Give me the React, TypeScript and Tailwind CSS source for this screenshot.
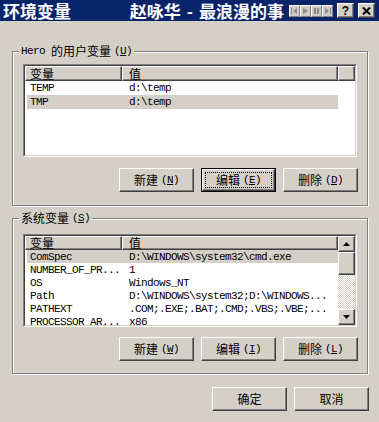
import React from "react";

const cjk = "font-['Noto_Sans_CJK_SC',sans-serif]";
const mono = "font-['Liberation_Mono',monospace] text-[11px] tracking-[-0.6px]";
const raised =
  "border border-t-white border-l-white border-r-[#404040] border-b-[#404040] shadow-[inset_-1px_-1px_0_#808080] bg-[#d4d0c8]";

function Acc({ zh, k }: { zh: string; k: string }) {
  return (
    <span className="inline-flex items-center text-[12px] leading-[12px]">
      <span className={cjk}>{zh}</span>
      <span className={`${mono} ml-[3px]`}>
        (<span className="underline underline-offset-1">{k}</span>)
      </span>
    </span>
  );
}

function Btn({ zh, k, def }: { zh: string; k?: string; def?: boolean }) {
  return (
    <div className={`w-[75px] h-[24px] ${def ? "border border-black" : ""}`}>
      <div className={`w-full h-full ${raised} p-[2px]`}>
        <div
          className={`w-full h-full flex items-center justify-center border ${
            def ? "border-dotted border-black" : "border-transparent"
          }`}
        >
          {k ? <Acc zh={zh} k={k} /> : <span className={`${cjk} text-[12px] leading-[12px]`}>{zh}</span>}
        </div>
      </div>
    </div>
  );
}

function MediaBtn({ children }: { children: React.ReactNode }) {
  return (
    <div className="w-[11px] h-[12px] bg-[#cfcbc4] border border-t-white border-l-white border-r-[#808080] border-b-[#808080] flex items-center justify-center">
      <svg width="7" height="6" viewBox="0 0 7 6" fill="#8a8a8a">
        {children}
      </svg>
    </div>
  );
}

function TitleBar() {
  const t = `${cjk} text-white font-bold text-[17px] leading-[20px]`;
  return (
    <div className="h-[21px] shrink-0 bg-[#0a246a] flex items-center pr-[4px]">
      <span className={`${t} ml-[3px]`}>环境变量</span>
      <span className={`${t} ml-auto flex`}>
        <span>赵咏华</span>
        <span className="mx-[6px]">-</span>
        <span>最浪漫的事</span>
      </span>
      <div className="ml-[5px] flex">
        <MediaBtn>
          <rect x="0" y="0" width="1" height="6" />
          <path d="M6 0 L2 3 L6 6 Z" />
        </MediaBtn>
        <MediaBtn>
          <path d="M1 0 L6 3 L1 6 Z" />
        </MediaBtn>
        <MediaBtn>
          <rect x="1" y="0" width="2" height="6" />
          <rect x="4" y="0" width="2" height="6" />
        </MediaBtn>
        <MediaBtn>
          <path d="M1 0 L5 3 L1 6 Z" />
          <rect x="6" y="0" width="1" height="6" />
        </MediaBtn>
      </div>
      <div className={`ml-[4px] w-[17px] h-[15px] ${raised} flex items-center justify-center`}>
        <span className="font-['Liberation_Sans',sans-serif] font-bold text-[12px] leading-[12px]">?</span>
      </div>
      <div className={`ml-[4px] w-[17px] h-[15px] ${raised} flex items-center justify-center`}>
        <svg width="9" height="8" viewBox="0 0 9 8">
          <path d="M1 0.5 L8 7.5 M8 0.5 L1 7.5" stroke="#000" strokeWidth="2" />
        </svg>
      </div>
    </div>
  );
}

type Row = [string, string];

function Arrow({ up }: { up?: boolean }) {
  return (
    <div className={`w-full h-[16px] shrink-0 ${raised} flex items-center justify-center`}>
      <svg width="7" height="4" viewBox="0 0 7 4">
        <path d={up ? "M3.5 0 L7 4 L0 4 Z" : "M0 0 L7 0 L3.5 4 Z"} fill="#000" />
      </svg>
    </div>
  );
}

function ListView({
  rows,
  h,
  rowH,
  headH,
  sel,
  scroll,
}: {
  rows: Row[];
  h: number;
  rowH: number;
  headH: number;
  sel: number;
  scroll?: boolean;
}) {
  return (
    <div
      className="w-[334px] border border-t-[#808080] border-l-[#808080] border-r-white border-b-white"
      style={{ height: h }}
    >
      <div className="w-full h-full border border-t-[#404040] border-l-[#404040] border-r-[#d4d0c8] border-b-[#d4d0c8] bg-white flex overflow-hidden">
        <div className="flex-1 min-w-0 flex flex-col">
          <div className="shrink-0 flex" style={{ height: headH }}>
            <div className={`w-[97px] h-full ${raised} pl-[4px] flex items-center`}>
              <span className={`${cjk} text-[12px] leading-[12px]`}>变量</span>
            </div>
            <div className={`w-[216px] h-full ${raised} pl-[6px] flex items-center`}>
              <span className={`${cjk} text-[12px] leading-[12px]`}>值</span>
            </div>
            {!scroll && <div className={`flex-1 h-full ${raised}`} />}
          </div>
          {rows.map((r, i) => (
            <div key={i} className="flex pl-[2px] shrink-0" style={{ height: rowH }}>
              <div className={`flex items-center ${i === sel ? "bg-[#d4d0c8]" : ""}`}>
                <div className={`w-[95px] pl-[3px] whitespace-pre leading-[12px] ${mono}`}>{r[0]}</div>
                <div className={`w-[216px] pl-[7px] whitespace-pre leading-[12px] ${mono}`}>{r[1]}</div>
              </div>
            </div>
          ))}
        </div>
        {scroll && (
          <div className="w-[17px] shrink-0 flex flex-col">
            <Arrow up />
            <div className={`h-[23px] shrink-0 ${raised}`} />
            <div className="flex-1 bg-[image:repeating-conic-gradient(#ffffff_0%_25%,#d4d0c8_0%_50%)] bg-[length:2px_2px]" />
            <Arrow />
          </div>
        )}
      </div>
    </div>
  );
}

function Group({ legend, className, pb, children }: { legend: React.ReactNode; className?: string; pb: string; children: React.ReactNode }) {
  return (
    <div
      className={`ml-[12px] w-[356px] shrink-0 border border-[#808080] shadow-[inset_1px_1px_0_#fff,1px_1px_0_#fff] pl-[10px] pr-[9px] flex flex-col ${pb} ${className ?? ""}`}
    >
      <div className="-mt-[7px] -ml-[4px] self-start h-[12px] px-[2px] bg-[#d4d0c8] flex items-center">{legend}</div>
      {children}
    </div>
  );
}

export default function App() {
  const userRows: Row[] = [
    ["TEMP", "d:\\temp"],
    ["TMP", "d:\\temp"],
  ];
  const sysRows: Row[] = [
    ["ComSpec", "D:\\WINDOWS\\system32\\cmd.exe"],
    ["NUMBER_OF_PR...", "1"],
    ["OS", "Windows_NT"],
    ["Path", "D:\\WINDOWS\\system32;D:\\WINDOWS..."],
    ["PATHEXT", ".COM;.EXE;.BAT;.CMD;.VBS;.VBE;..."],
    ["PROCESSOR_AR...", "x86"],
  ];

  return (
    <div className="w-[379px] h-[422px] bg-[#d4d0c8] overflow-hidden flex flex-col text-black">
      <TitleBar />

      <Group
        className="mt-[30px]"
        pb="pb-[13px]"
        legend={
          <span className="inline-flex items-center text-[12px] leading-[12px]">
            <span className={mono}>Hero</span>
            <span className={`${cjk} ml-[6px]`}>的用户变量</span>
            <span className={`${mono} ml-[3px]`}>
              (<span className="underline underline-offset-1">U</span>)
            </span>
          </span>
        }
      >
        <div className="mt-[7px]">
          <ListView rows={userRows} h={93} rowH={14} headH={15} sel={1} />
        </div>
        <div className="mt-[11px] flex justify-end gap-[7px]">
          <Btn zh="新建" k="N" />
          <Btn zh="编辑" k="E" def />
          <Btn zh="删除" k="D" />
        </div>
      </Group>

      <Group className="mt-[12px]" pb="pb-[12px]" legend={<Acc zh="系统变量" k="S" />}>
        <div className="mt-[10px]">
          <ListView rows={sysRows} h={93} rowH={13} headH={14} sel={0} scroll />
        </div>
        <div className="mt-[10px] flex justify-end gap-[7px]">
          <Btn zh="新建" k="W" />
          <Btn zh="编辑" k="I" />
          <Btn zh="删除" k="L" />
        </div>
      </Group>

      <div className="mt-[13px] flex justify-end gap-[7px] pr-[10px]">
        <Btn zh="确定" />
        <Btn zh="取消" />
      </div>
    </div>
  );
}
